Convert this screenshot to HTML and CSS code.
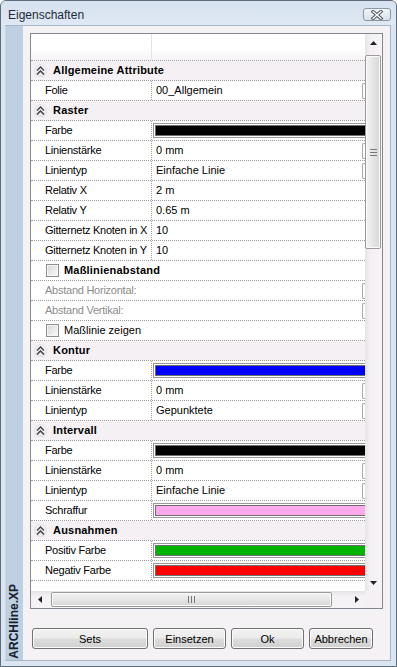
FILE: index.html
```html
<!DOCTYPE html>
<html lang="de">
<head>
    <meta charset="UTF-8">
    <title>Eigenschaften</title>
    <link rel="stylesheet" href="styles.css">
</head>
<body>
    <div class="window">
        <div class="titlebar">
            <span class="title">Eigenschaften</span>
            <span class="close">
                <svg width="14" height="10" viewBox="0 0 14 10">
                    <path d="M3 1.5 L11 8.5 M11 1.5 L3 8.5" stroke="#4a4f57" stroke-width="3.2" stroke-linecap="square"/>
                    <path d="M3 1.5 L11 8.5 M11 1.5 L3 8.5" stroke="#fff" stroke-width="1.4" stroke-linecap="square"/>
                </svg>
            </span>
        </div>

        <div class="client">
            <div class="brand"><span>ARCHline.XP</span></div>

            <div class="main">
                <div class="grid">
                    <div class="view">
                        <div class="table">
                            <div class="colhead"><div class="c1"></div><div class="c2"></div></div>

                            <div class="row section"><span class="fold"><svg width="9" height="9" viewBox="0 0 9 9"><path d="M1 4.5 L4.5 1 L8 4.5 M1 8.5 L4.5 5 L8 8.5" fill="none" stroke="#4b4b4b" stroke-width="1.6"/></svg></span>Allgemeine Attribute</div>
                            <div class="row"><div class="label">Folie</div><div class="value"><span class="text">00_Allgemein</span><span class="drop"></span></div></div>

                            <div class="row section"><span class="fold"><svg width="9" height="9" viewBox="0 0 9 9"><path d="M1 4.5 L4.5 1 L8 4.5 M1 8.5 L4.5 5 L8 8.5" fill="none" stroke="#4b4b4b" stroke-width="1.6"/></svg></span>Raster</div>
                            <div class="row"><div class="label">Farbe</div><div class="value"><span class="swatch"><i class="black"></i></span></div></div>
                            <div class="row"><div class="label">Linienstärke</div><div class="value"><span class="text">0 mm</span><span class="drop"></span></div></div>
                            <div class="row"><div class="label">Linientyp</div><div class="value"><span class="text">Einfache Linie</span><span class="drop"></span></div></div>
                            <div class="row"><div class="label">Relativ X</div><div class="value"><span class="text">2 m</span></div></div>
                            <div class="row"><div class="label">Relativ Y</div><div class="value"><span class="text">0.65 m</span></div></div>
                            <div class="row"><div class="label">Gitternetz Knoten in X</div><div class="value"><span class="text">10</span></div></div>
                            <div class="row"><div class="label">Gitternetz Knoten in Y</div><div class="value"><span class="text">10</span></div></div>
                            <div class="row check bold"><span class="box"></span>Maßlinienabstand</div>
                            <div class="row wide"><span class="text">Abstand Horizontal:</span><span class="drop"></span></div>
                            <div class="row wide"><span class="text">Abstand Vertikal:</span><span class="drop"></span></div>
                            <div class="row check"><span class="box"></span>Maßlinie zeigen</div>

                            <div class="row section"><span class="fold"><svg width="9" height="9" viewBox="0 0 9 9"><path d="M1 4.5 L4.5 1 L8 4.5 M1 8.5 L4.5 5 L8 8.5" fill="none" stroke="#4b4b4b" stroke-width="1.6"/></svg></span>Kontur</div>
                            <div class="row"><div class="label">Farbe</div><div class="value"><span class="swatch"><i class="blue"></i></span></div></div>
                            <div class="row"><div class="label">Linienstärke</div><div class="value"><span class="text">0 mm</span><span class="drop"></span></div></div>
                            <div class="row"><div class="label">Linientyp</div><div class="value"><span class="text">Gepunktete</span><span class="drop"></span></div></div>

                            <div class="row section"><span class="fold"><svg width="9" height="9" viewBox="0 0 9 9"><path d="M1 4.5 L4.5 1 L8 4.5 M1 8.5 L4.5 5 L8 8.5" fill="none" stroke="#4b4b4b" stroke-width="1.6"/></svg></span>Intervall</div>
                            <div class="row"><div class="label">Farbe</div><div class="value"><span class="swatch"><i class="black"></i></span></div></div>
                            <div class="row"><div class="label">Linienstärke</div><div class="value"><span class="text">0 mm</span><span class="drop"></span></div></div>
                            <div class="row"><div class="label">Linientyp</div><div class="value"><span class="text">Einfache Linie</span><span class="drop"></span></div></div>
                            <div class="row"><div class="label">Schraffur</div><div class="value"><span class="swatch"><i class="pink"></i></span></div></div>

                            <div class="row section"><span class="fold"><svg width="9" height="9" viewBox="0 0 9 9"><path d="M1 4.5 L4.5 1 L8 4.5 M1 8.5 L4.5 5 L8 8.5" fill="none" stroke="#4b4b4b" stroke-width="1.6"/></svg></span>Ausnahmen</div>
                            <div class="row"><div class="label">Positiv Farbe</div><div class="value"><span class="swatch"><i class="green"></i></span></div></div>
                            <div class="row"><div class="label">Negativ Farbe</div><div class="value"><span class="swatch"><i class="red"></i></span></div></div>
                        </div>
                    </div>

                    <div class="vscroll">
                        <div class="arrow"><svg width="7" height="4" viewBox="0 0 7 4"><path d="M0 4 L3.5 0 L7 4 Z" fill="#222"/></svg></div>
                        <div class="thumb"><span class="grip"></span></div>
                        <div class="fill"></div>
                        <div class="arrow"><svg width="7" height="4" viewBox="0 0 7 4"><path d="M0 0 L3.5 4 L7 0 Z" fill="#222"/></svg></div>
                    </div>

                    <div class="hscroll">
                        <div class="arrow"><svg width="4" height="7" viewBox="0 0 4 7"><path d="M4 0 L0 3.5 L4 7 Z" fill="#222"/></svg></div>
                        <div class="thumb"><span class="grip"></span></div>
                        <div class="fill"></div>
                        <div class="arrow"><svg width="4" height="7" viewBox="0 0 4 7"><path d="M0 0 L4 3.5 L0 7 Z" fill="#222"/></svg></div>
                    </div>

                    <div class="corner"></div>
                </div>

                <div class="buttons">
                    <button class="sets">Sets</button>
                    <button class="mid">Einsetzen</button>
                    <button class="mid">Ok</button>
                    <button class="cancel">Abbrechen</button>
                </div>
            </div>
        </div>
    </div>
</body>
</html>
```

FILE: styles.css
```css
body {
    margin: 0;
    font-family: 'Liberation Sans', Arial, sans-serif;
    font-size: 11px;
    color: #000;
}
.window {
    width: 397px;
    height: 667px;
    box-sizing: border-box;
    border: 1px solid #5d6b7b;
    border-radius: 6px 6px 0 0;
    background: #dae5f1;
    display: flex;
    flex-direction: column;
}
.titlebar {
    height: 24px;
    box-sizing: border-box;
    padding: 3px 5px 0 7px;
    display: flex;
    align-items: center;
    background: linear-gradient(#d6e2ef, #dfe8f3);
    border-radius: 5px 5px 0 0;
}
.title {
    font-size: 12px;
    color: #1e2a36;
}
.close {
    margin-left: auto;
    align-self: flex-start;
    margin-top: 4px;
    width: 28px;
    height: 13px;
    box-sizing: border-box;
    border: 1px solid #8b97a4;
    border-radius: 3px;
    background: linear-gradient(#f2f5f9, #d9e1ea);
    display: flex;
    align-items: center;
    justify-content: center;
}
.client {
    flex: 1;
    margin: 0 5px 5px 4px;
    border: 1px solid #a9b6c4;
    border-left-color: #c9d6e4;
    background: #f5f2f5;
    display: flex;
    min-height: 0;
}
.brand {
    width: 17px;
    background: #bdd0e2;
    display: flex;
    flex-direction: column;
    justify-content: flex-end;
    align-items: center;
}
.brand span {
    writing-mode: vertical-rl;
    transform: rotate(180deg);
    font-weight: bold;
    font-size: 12px;
    color: #17202b;
    padding-top: 1px;
    margin-right: 1px;
}
.main {
    flex: 1;
    padding: 7px 7px 0 7px;
    display: flex;
    flex-direction: column;
}
.grid {
    height: 576px;
    box-sizing: border-box;
    border: 1px solid #828790;
    display: grid;
    grid-template-columns: 334px 17px;
    grid-template-rows: 557px 17px;
}
.view {
    overflow: hidden;
    background: #fff;
}
.table {
    width: 350px;
}
.colhead {
    height: 27px;
    box-sizing: border-box;
    border-bottom: 1px dotted #9c9c9c;
    display: flex;
    background: linear-gradient(#fff 55%, #f6f4f6);
}
.colhead .c1 {
    width: 121px;
    box-sizing: border-box;
    border-right: 1px solid #e6e3e6;
}
.row {
    height: 20px;
    box-sizing: border-box;
    border-bottom: 1px dotted #9c9c9c;
    display: flex;
    line-height: 19px;
    white-space: nowrap;
}
.label {
    width: 121px;
    box-sizing: border-box;
    border-right: 1px dotted #9c9c9c;
    padding-left: 14px;
    letter-spacing: -0.25px;
    overflow: hidden;
}
.value {
    flex: 1;
    display: flex;
    min-width: 0;
}
.value .text {
    flex: 1;
    padding-left: 4px;
}
.drop {
    flex-shrink: 0;
    width: 19px;
    height: 16px;
    margin-top: 2px;
    box-sizing: border-box;
    border: 1px solid #a9a9a9;
    border-right: none;
    border-radius: 2px 0 0 2px;
}
.section {
    background: #f4f0f4;
    font-weight: bold;
    letter-spacing: 0.2px;
}
.fold {
    width: 13px;
    height: 13px;
    box-sizing: border-box;
    margin: 3px 6px 0 3px;
    border-radius: 50%;
    border: 1px solid #e2dee4;
    background: radial-gradient(circle at 50% 35%, #fff, #e6e2e8);
    display: flex;
    align-items: center;
    justify-content: center;
}
.swatch {
    flex-shrink: 0;
    width: 240px;
    height: 15px;
    margin: 2px 0 0 1px;
    box-sizing: border-box;
    border: 1px solid #999;
    padding: 1px;
    background: #fff;
}
.swatch i {
    display: block;
    height: 11px;
    box-sizing: border-box;
    border: 1px solid #6e6e6e;
}
.black { background: #000; }
.blue { background: #0000ff; }
.pink { background: #ffa8ec; }
.green { background: #00b400; }
.red { background: #ff0000; }
.wide .text {
    flex: 1;
    padding-left: 14px;
    color: #8c8c8c;
    letter-spacing: -0.25px;
}
.check {
    align-items: center;
}
.check .box {
    width: 13px;
    height: 13px;
    box-sizing: border-box;
    margin: 0 5px 0 15px;
    border: 1px solid #8e8f8f;
    background: linear-gradient(135deg, #d6d6d6, #fbfbfb);
    box-shadow: inset 0 0 0 1px #f4f4f4;
}
.bold {
    font-weight: bold;
    letter-spacing: 0.2px;
}
.vscroll {
    display: flex;
    flex-direction: column;
    background: linear-gradient(to right, #e5e3e5, #f3f1f3 30%, #f6f4f6);
}
.vscroll .arrow {
    height: 17px;
    display: flex;
    align-items: center;
    justify-content: center;
}
.vscroll .thumb {
    margin-top: 4px;
    height: 194px;
    box-sizing: border-box;
    border: 1px solid #9a9a9a;
    border-radius: 2px;
    margin-right: 1px;
    background: linear-gradient(to right, #f4f4f4, #e7e7e7 45%, #d6d6d6);
    box-shadow: inset 0 0 0 1px #fbfbfb;
    display: flex;
    align-items: center;
    justify-content: center;
}
.vscroll .grip {
    width: 7px;
    height: 5px;
    border-top: 1px solid #777;
    border-bottom: 1px solid #777;
    background: linear-gradient(transparent 2px, #777 2px, #777 3px, transparent 3px);
}
.fill {
    flex: 1;
}
.hscroll {
    display: flex;
    background: linear-gradient(#e5e3e5, #f3f1f3 30%, #f6f4f6);
}
.hscroll .arrow {
    width: 17px;
    display: flex;
    align-items: center;
    justify-content: center;
}
.hscroll .thumb {
    margin: 1px 0 1px 3px;
    width: 281px;
    box-sizing: border-box;
    border: 1px solid #9a9a9a;
    border-radius: 2px;
    background: linear-gradient(#f4f4f4, #e7e7e7 45%, #d6d6d6);
    box-shadow: inset 0 0 0 1px #fbfbfb;
    display: flex;
    align-items: center;
    justify-content: center;
}
.hscroll .grip {
    width: 5px;
    height: 7px;
    border-left: 1px solid #777;
    border-right: 1px solid #777;
    background: linear-gradient(to right, transparent 2px, #777 2px, #777 3px, transparent 3px);
}
.corner {
    background: #f3f1f3;
}
.buttons {
    margin-top: 19px;
    padding-left: 2px;
    display: flex;
    gap: 5px;
}
button {
    height: 21px;
    padding: 0;
    font-family: 'Liberation Sans', Arial, sans-serif;
    font-size: 11px;
    color: #000;
    border: 1px solid #707070;
    border-radius: 3px;
    background: linear-gradient(#f2f2f2, #ebebeb 48%, #dddddd 52%, #cfcfcf);
    box-shadow: inset 0 0 0 1px #fbfbfb;
}
.sets { width: 116px; }
.mid { width: 73px; }
.cancel { width: 64px; }
```
